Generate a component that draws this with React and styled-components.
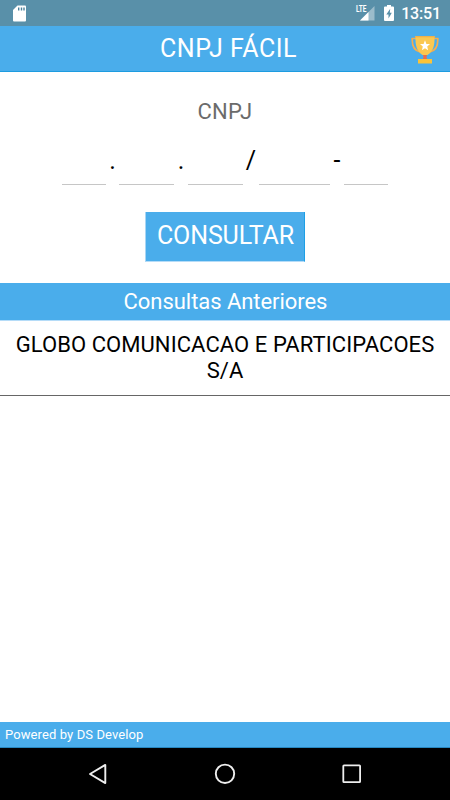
import React from 'react';
import styled, { createGlobalStyle } from 'styled-components';

const GlobalStyle = createGlobalStyle`
  * {
    box-sizing: border-box;
  }

  body {
    margin: 0;
    background-color: #fff;
    font-family: Roboto, sans-serif;
  }
`;

const Screen = styled.div`
  display: flex;
  flex-direction: column;
  width: 100%;
  height: 100vh;
  overflow: hidden;
  background-color: #fff;
`;

const StatusBar = styled.div`
  display: flex;
  flex: none;
  align-items: center;
  height: 26px;
  padding: 0 9px 0 13px;
  background-color: #5990a9;
`;

const StatusIcons = styled.div`
  display: flex;
  align-items: center;
  gap: 9px;
  margin-left: auto;
`;

const Clock = styled.span`
  margin-left: -2px;
  padding-top: 2px;
  color: #fff;
  font-size: 16px;
  font-weight: 500;
  letter-spacing: -0.15px;
  line-height: 20px;
`;

const AppBar = styled.header`
  display: grid;
  flex: none;
  grid-template-columns: 48px 1fr 48px;
  align-items: center;
  height: 46px;
  background-color: #4aadeb;
  border-bottom: 1px solid #1d9ce0;
`;

const Title = styled.h1`
  grid-column: 2;
  margin: 0;
  padding-left: 7px;
  color: #fff;
  font-size: 25px;
  font-weight: 400;
  letter-spacing: 0.5px;
  line-height: 30px;
  text-align: center;
`;

const TrophyButton = styled.button`
  display: flex;
  justify-content: center;
  padding: 3px 2px 0 0;
  background: none;
  border: none;
`;

const Form = styled.form`
  display: flex;
  flex: none;
  flex-direction: column;
  align-items: center;
  height: 211px;
  padding-top: 26px;
`;

const Label = styled.label`
  color: #6b6b6b;
  font-size: 22px;
  letter-spacing: 0.3px;
  line-height: 28px;
`;

const Fields = styled.div`
  display: flex;
  height: 43px;
  margin-top: 16px;
`;

const Field = styled.input`
  width: ${(props) => props.$width}px;
  height: 43px;
  padding: 0;
  background: none;
  border: none;
  border-bottom: 1px solid #c6c6c6;
  border-radius: 0;
  font: inherit;
  font-size: 22px;
  text-align: center;
  outline: none;
`;

const Separator = styled.span`
  width: ${(props) => props.$width}px;
  padding-top: 4px;
  color: #000;
  font-size: 25px;
  line-height: 30px;
  text-align: center;
`;

const SubmitButton = styled.button`
  width: 160px;
  height: 50px;
  margin-top: 27px;
  padding: 0 0 1px 1px;
  background-color: #4aadeb;
  background-clip: padding-box;
  border: solid;
  border-width: 0 1px 1px;
  border-color: #b5dcf8 #1d9fe6 #b5dcf8 #a8d6f5;
  color: #fff;
  font-family: inherit;
  font-size: 25px;
  letter-spacing: -0.1px;
  line-height: 30px;
`;

const SectionTitle = styled.h2`
  flex: none;
  height: 37px;
  margin: 0;
  padding-left: 1px;
  background-color: #4aadeb;
  color: #fff;
  font-size: 22px;
  font-weight: 400;
  letter-spacing: -0.05px;
  line-height: 38px;
  text-align: center;
`;

const History = styled.ul`
  flex: 1;
  margin: 0;
  padding: 0;
  border-top: 1px solid #b5dcf8;
  list-style: none;
`;

const HistoryItem = styled.li`
  height: 75px;
  padding: 11px 12px 0;
  border-bottom: 1px solid #666;
  color: #000;
  font-size: 22px;
  letter-spacing: 0.07px;
  line-height: 26px;
  text-align: center;
`;

const Footer = styled.footer`
  flex: none;
  height: 26px;
  padding-left: 5px;
  background-color: #4aadeb;
  border-bottom: 1px solid #2787c0;
  color: #fff;
  font-size: 13px;
  letter-spacing: 0.1px;
  line-height: 26px;
`;

const NavBar = styled.nav`
  display: flex;
  flex: none;
  align-items: center;
  justify-content: center;
  gap: 103px;
  height: 52px;
  background-color: #000;
`;

const SdCardIcon = () => (
  <svg width="13" height="17" viewBox="0 0 13 17">
    <path d="M4.5 .5H12Q13 .5 13 1.5V15.5Q13 16.5 12 16.5H1Q0 16.5 0 15.5V5Z" fill="#fff" />
    <path d="M5.7 2.5v3M8.5 2.5v3M11 2.5v3" stroke="#4b829c" strokeWidth="1.4" />
  </svg>
);

const SignalIcon = () => (
  <svg width="20" height="18" viewBox="0 0 20 18">
    <path d="M5 16.5L19.5 2V16.5Z" fill="#9bbccb" />
    <path d="M5 16.5L13.5 8V16.5Z" fill="#fff" />
    <text
      x="1"
      y="8"
      fill="#fff"
      fontFamily="Roboto, sans-serif"
      fontSize="8.5"
      fontWeight="700"
      textLength="10.5"
      lengthAdjust="spacingAndGlyphs"
    >
      LTE
    </text>
  </svg>
);

const BatteryIcon = () => (
  <svg width="10" height="16" viewBox="0 0 10 16">
    <path d="M3 0H7V1.5H9Q10 1.5 10 2.5V15Q10 16 9 16H1Q0 16 0 15V2.5Q0 1.5 1 1.5H3Z" fill="#fff" />
    <path d="M6.2 3.7L2.3 9.5H4.5V13.5L7.8 7.7H5.8Z" fill="#5990a9" />
  </svg>
);

const TrophyIcon = () => (
  <svg width="28" height="28" viewBox="0 0 28 28">
    <path
      d="M5 2.5H1.2C1 9 2.5 14.5 9 15.8M23 2.5H26.8C27 9 25.5 14.5 19 15.8"
      fill="none"
      stroke="#f3ad50"
      strokeWidth="1.7"
    />
    <path d="M4.5 .5H23.5C23.8 9 22.5 15 16.5 19H11.5C5.5 15 4.2 9 4.5 .5Z" fill="#fbc850" />
    <path d="M4 0H24V1.3H4Z" fill="#eeb14c" />
    <path d="M12 19H16L15.5 21L16 23H12L12.5 21Z" fill="#ed6b48" />
    <path d="M7 23H21V27.5H7Z" fill="#fbc338" />
    <path d="M14 4.3L15.4 7.9L19 8.1L16.2 10.5L17.1 14.3L14 12.2L10.9 14.3L11.8 10.5L9 8.1L12.6 7.9Z" fill="#fff" />
  </svg>
);

const BackIcon = () => (
  <svg width="24" height="24" viewBox="0 0 24 24">
    <path d="M19.3 2.9V21.1L4 12Z" fill="none" stroke="#eee" strokeWidth="1.9" strokeLinejoin="round" />
  </svg>
);

const HomeIcon = () => (
  <svg width="24" height="24" viewBox="0 0 24 24">
    <circle cx="12" cy="11.8" r="9.2" fill="none" stroke="#eee" strokeWidth="1.9" />
  </svg>
);

const RecentsIcon = () => (
  <svg width="24" height="24" viewBox="0 0 24 24">
    <rect x="3.3" y="3.3" width="16.8" height="16.8" rx=".7" fill="none" stroke="#eee" strokeWidth="1.8" />
  </svg>
);

const parts = [
  { width: 44, separator: '.', gap: 13 },
  { width: 55, separator: '.', gap: 14 },
  { width: 55, separator: '/', gap: 16 },
  { width: 71, separator: '-', gap: 14 },
  { width: 44 },
];

const companies = ['GLOBO COMUNICACAO E PARTICIPACOES S/A'];

const App = () => {
  return (
    <Screen>
      <GlobalStyle />
      <StatusBar>
        <SdCardIcon />
        <StatusIcons>
          <SignalIcon />
          <BatteryIcon />
          <Clock>13:51</Clock>
        </StatusIcons>
      </StatusBar>
      <AppBar>
        <Title>CNPJ FÁCIL</Title>
        <TrophyButton>
          <TrophyIcon />
        </TrophyButton>
      </AppBar>
      <Form>
        <Label>CNPJ</Label>
        <Fields>
          {parts.map((part, index) => (
            <React.Fragment key={index}>
              <Field $width={part.width} />
              {part.separator && <Separator $width={part.gap}>{part.separator}</Separator>}
            </React.Fragment>
          ))}
        </Fields>
        <SubmitButton type="button">CONSULTAR</SubmitButton>
      </Form>
      <SectionTitle>Consultas Anteriores</SectionTitle>
      <History>
        {companies.map((name) => (
          <HistoryItem key={name}>{name}</HistoryItem>
        ))}
      </History>
      <Footer>Powered by DS Develop</Footer>
      <NavBar>
        <BackIcon />
        <HomeIcon />
        <RecentsIcon />
      </NavBar>
    </Screen>
  );
};

export default App;
